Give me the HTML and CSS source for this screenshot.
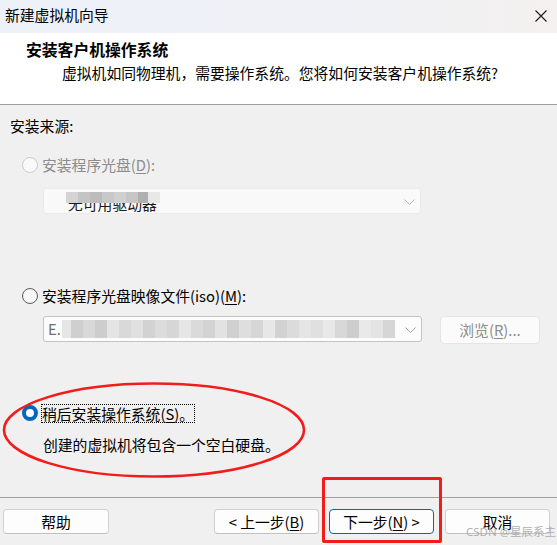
FILE: index.html
```html
<!DOCTYPE html>
<html lang="zh-CN">
<head>
<meta charset="utf-8">
<title>新建虚拟机向导</title>
<link rel="stylesheet" href="styles.css">
</head>
<body>
<div class="window">
  <div class="titlebar">
    <span class="title">新建虚拟机向导</span>
    <svg class="close" width="12" height="12" viewBox="0 0 12 12"><path d="M0.5 0.5 L11.5 11.5 M11.5 0.5 L0.5 11.5" stroke="#1a1a1a" stroke-width="1.1" fill="none"/></svg>
  </div>
  <div class="header">
    <div class="h-title">安装客户机操作系统</div>
    <div class="h-sub">虚拟机如同物理机，需要操作系统。您将如何安装客户机操作系统?</div>
  </div>
  <div class="content">
    <div class="label">安装来源:</div>

    <div class="radio-row disabled row-d">
      <span class="radio"></span>
      <span class="rtext">安装程序光盘(<u>D</u>):</span>
    </div>
    <div class="combo combo-disabled">
      <span class="combo-text">无可用驱动器</span>
      <div class="mosaic m1">
        <i style="width:12px;background:#d4d4d4"></i><i style="width:12px;background:#c4c4c4"></i><i style="width:12px;background:#bcbcbc"></i><i style="width:12px;background:#c8c8c8"></i><i style="width:12px;background:#d0d0d0"></i><i style="width:12px;background:#c6c6c6"></i><i style="width:10px;background:#b0b0b0"></i><i style="width:12px;background:#e8e8e8"></i>
      </div>
      <svg class="chev" width="11" height="6" viewBox="0 0 11 6"><path d="M0.5 0.5 L5.5 5.5 L10.5 0.5" stroke="#b4b4b4" stroke-width="1" fill="none"/></svg>
    </div>

    <div class="radio-row row-iso">
      <span class="radio enabled"></span>
      <span class="rtext">安装程序光盘映像文件(iso)(<u>M</u>):</span>
    </div>
    <div class="iso-row">
      <div class="combo combo-enabled">
        <span class="combo-text dim">E.</span>
        <div class="mosaic m2">
          <i style="width:9px;background:#e6e6e6"></i><i style="width:12px;background:#cfcfcf"></i><i style="width:12px;background:#d8d8d8"></i><i style="width:12px;background:#cdcdcd"></i><i style="width:12px;background:#e4e4e4"></i><i style="width:12px;background:#d9d9d9"></i><i style="width:12px;background:#e0e0e0"></i><i style="width:12px;background:#d2d2d2"></i><i style="width:12px;background:#dcdcdc"></i><i style="width:12px;background:#d6d6d6"></i><i style="width:12px;background:#e6e6e6"></i><i style="width:12px;background:#dadada"></i><i style="width:12px;background:#d3d3d3"></i><i style="width:12px;background:#e2e2e2"></i><i style="width:12px;background:#d0d0d0"></i><i style="width:12px;background:#dedede"></i><i style="width:12px;background:#d6d6d6"></i><i style="width:12px;background:#e7e7e7"></i><i style="width:12px;background:#d2d2d2"></i><i style="width:12px;background:#dbdbdb"></i><i style="width:12px;background:#e5e5e5"></i><i style="width:12px;background:#e0e0e0"></i><i style="width:12px;background:#e8e8e8"></i><i style="width:12px;background:#d8d8d8"></i><i style="width:12px;background:#cdcdcd"></i><i style="width:12px;background:#e9e9e9"></i><i style="width:12px;background:#e4e4e4"></i><i style="width:12px;background:#d6d6d6"></i>
        </div>
        <svg class="chev" width="11" height="6" viewBox="0 0 11 6"><path d="M0.5 0.5 L5.5 5.5 L10.5 0.5" stroke="#a8a8a8" stroke-width="1" fill="none"/></svg>
      </div>
      <div class="btn btn-disabled browse">浏览(<u>R</u>)...</div>
    </div>

    <div class="radio-row row-later">
      <span class="radio selected"></span>
      <span class="rtext focus">稍后安装操作系统(<u>S</u>)。</span>
    </div>
    <div class="desc">创建的虚拟机将包含一个空白硬盘。</div>
  </div>
  <div class="footer">
    <div class="btn help">帮助</div>
    <div class="spacer"></div>
    <div class="btn">&lt; 上一步(<u>B</u>)</div>
    <div class="btn primary">下一步(<u>N</u>) &gt;</div>
    <div class="btn">取消</div>
  </div>

  <svg class="annot-ellipse" width="310" height="100" viewBox="0 0 310 100"><ellipse cx="154" cy="50" rx="150" ry="46.5" stroke="#f21c1c" stroke-width="2.6" fill="none"/></svg>
  <div class="annot-rect"></div>
  <div class="watermark">CSDN @星辰系主</div>
</div>
</body>
</html>
```

FILE: styles.css
```css
* { box-sizing: border-box; }
html, body {
  margin: 0;
  padding: 0;
  background: #f0f0f0;
}
body {
  font-family: "Noto Sans CJK SC", "Microsoft YaHei", sans-serif;
  font-size: 14.8px;
  color: #000;
}
.window {
  position: relative;
  width: 557px;
  height: 545px;
  overflow: hidden;
  background: #f0f0f0;
}
.titlebar {
  height: 33px;
  display: flex;
  align-items: center;
  justify-content: space-between;
  padding: 0 10px 3px 5px;
  background: linear-gradient(90deg, #edf1f8 0%, #eff1f6 60%, #f4f1ef 100%);
}
.title { font-size: 14.8px; line-height: 20px; }
.close { margin-top: 2px; }
.header {
  height: 72px;
  background: #fff;
  border-bottom: 1px solid #a0a0a0;
  padding-top: 7px;
}
.h-title {
  margin-left: 26px;
  font-weight: bold;
  font-size: 15.8px;
  line-height: 20px;
}
.h-sub {
  margin-left: 62px;
  margin-top: 3px;
  line-height: 20px;
}
.content {
  height: 392px;
  padding-top: 11px;
}
.label {
  margin-left: 10px;
  line-height: 20px;
}
.radio-row {
  display: flex;
  align-items: center;
  height: 20px;
  margin-left: 22px;
}
.row-d { margin-top: 19px; }
.row-iso { margin-top: 72px; }
.row-later { margin-top: 59px; }
.radio {
  width: 16px;
  height: 16px;
  border-radius: 50%;
  border: 1px solid #cccccc;
  background: #f9f9f9;
  flex: none;
}
.radio.enabled { border-color: #5c5c5c; background: #f7f7f7; }
.radio.selected {
  border: 4.5px solid #0067c0;
  background: #fff;
}
.rtext {
  margin-left: 4px;
  line-height: 20px;
  white-space: nowrap;
}
.disabled .rtext { color: #8c8c8c; }
.rtext.focus {
  margin-left: 3px;
  outline: 1px dotted #000;
  outline-offset: -1px;
  padding: 0 1px;
  height: 19px;
  line-height: 19px;
}
.combo {
  position: relative;
  height: 26px;
  width: 378px;
  margin-left: 43px;
  border-radius: 3px;
  display: flex;
  align-items: center;
}
.combo-disabled {
  margin-top: 13px;
  background: #f9f9f9;
  border: 1px solid #ebebeb;
}
.combo-enabled {
  background: #fcfcfc;
  border: 1px solid #c4c4c4;
  width: 379px;
}
.combo-text {
  margin-left: 24px;
  line-height: 18px;
  padding-top: 6px;
  color: #1a1a1a;
  white-space: nowrap;
}
.combo-text.dim { margin-left: 4px; padding-top: 0; color: #707070; }
.mosaic {
  position: absolute;
  display: flex;
}
.mosaic i { display: block; height: 100%; }
.m1 { left: 22px; top: 3px; height: 11px; }
.m2 { left: 18px; top: 3px; height: 18px; }
.chev { position: absolute; right: 5px; top: 10px; }
.iso-row {
  display: flex;
  align-items: flex-start;
  margin-top: 10px;
}
.btn {
  height: 25px;
  width: 106px;
  border: 1px solid #d0d0d0;
  border-bottom-color: #c2c2c2;
  border-radius: 4px;
  background: #fdfdfd;
  display: flex;
  align-items: center;
  justify-content: center;
  white-space: nowrap;
  line-height: 20px;
}
.btn-disabled {
  background: #fbfbfb;
  border: 1px solid #e5e5e5;
  color: #8c8c8c;
}
.browse {
  margin-left: 18px;
  width: 100px;
  height: 28px;
}
.desc {
  margin-left: 43px;
  margin-top: 12px;
  line-height: 20px;
}
.footer {
  border-top: 1px solid #a0a0a0;
  height: 48px;
  display: flex;
  align-items: flex-start;
  padding: 11px 7px 0 3px;
}
.help { width: 106px; }
.spacer { flex: 1; }
.footer .btn + .btn { margin-left: 10px; }
.footer .btn:nth-child(3) { width: 105px; }
.primary { border-color: #0067c0; border-bottom-color: #0067c0; width: 105px; }
.footer .btn:last-child { margin-left: 11px; width: 105px; }
u { text-decoration: underline; text-underline-offset: 2px; }

.annot-ellipse {
  position: absolute;
  left: 0;
  top: 380px;
}
.annot-rect {
  position: absolute;
  left: 322px;
  top: 477px;
  width: 120px;
  height: 66px;
  border: 3.5px solid #f21c1c;
  border-radius: 2px;
}
.watermark {
  position: absolute;
  left: 466px;
  top: 524px;
  font-size: 11.5px;
  line-height: 16px;
  white-space: nowrap;
  color: rgba(150,150,150,0.75);
  font-family: "Noto Sans", "Noto Sans CJK SC", sans-serif;
}
```
